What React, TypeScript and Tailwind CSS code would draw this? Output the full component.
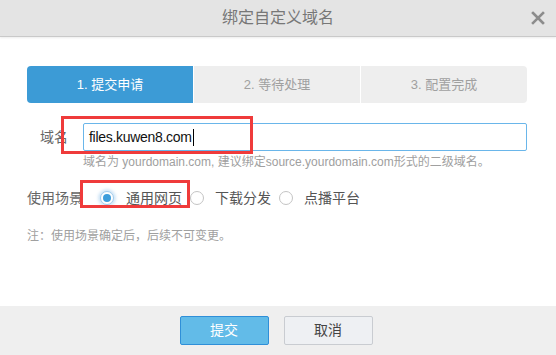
const font = { fontFamily: '"Liberation Sans", "Noto Sans CJK SC", sans-serif' };

const steps = ['1. 提交申请', '2. 等待处理', '3. 配置完成'];

function Radio({ checked }: { checked?: boolean }) {
  if (checked) {
    return (
      <span className="flex h-[14px] w-[14px] shrink-0 items-center justify-center rounded-full border border-[#9fcbed] bg-white shadow-[0_0_3px_2px_rgba(120,180,230,0.35)]">
        <span className="block h-[8px] w-[8px] rounded-full bg-[#3d9ddb]" />
      </span>
    );
  }
  return <span className="block h-[14px] w-[14px] shrink-0 rounded-full border border-[#c4c4c4] bg-white" />;
}

export default function App() {
  return (
    <div className="flex h-[355px] w-[556px] flex-col overflow-hidden bg-white" style={font}>
      {/* title bar */}
      <div className="relative flex h-[37px] shrink-0 items-center justify-center border-b border-[#c9c9c9] bg-[#e4e4e4] shadow-[0_1px_2px_rgba(0,0,0,0.08)]">
        <span className="text-[16px] text-[#777]">绑定自定义域名</span>
        <svg className="absolute right-[11px] top-[11px]" width="14" height="14" viewBox="0 0 14 14">
          <path d="M2 2 L12 12 M12 2 L2 12" stroke="#8c8c8c" strokeWidth="2.6" strokeLinecap="square" />
        </svg>
      </div>

      {/* body */}
      <div className="flex-1 pl-[27px] pr-[29px] pt-[29px]">
        <div className="flex h-[37px] gap-px overflow-hidden rounded-[4px]">
          {steps.map((s, i) => (
            <div
              key={s}
              className={
                i === 0
                  ? 'flex flex-1 items-center justify-center bg-[#3c9bd6] text-[13px] text-white'
                  : 'flex flex-1 items-center justify-center bg-[#eeeeee] text-[13px] text-[#a0a0a0]'
              }
            >
              {s}
            </div>
          ))}
        </div>

        <div className="relative mt-[20px] flex items-center">
          <span className="w-[56px] shrink-0 pl-[13px] text-[14px] text-[#666]">域名</span>
          <div className="flex h-[28px] flex-1 items-center rounded-[2px] border border-[#6ab6ea] px-[5px] text-[14px] tracking-[-0.3px] text-[#111]">
            files.kuwen8.com
            <span className="ml-[1px] h-[17px] w-px bg-black" />
          </div>
          <div className="absolute left-[34px] top-[-7px] h-[38px] w-[192px] border-[3px] border-[#ef3b3b]" />
        </div>

        <p className="ml-[56px] mt-[4px] text-[12px] leading-[14px] text-[#a0a0a0]">
          域名为 yourdomain.com, 建议绑定source.yourdomain.com形式的二级域名。
        </p>

        <div className="relative mt-[19px] flex h-[20px] items-center text-[14px]">
          <span className="w-[73px] shrink-0 text-[#666]">使用场景</span>
          <Radio checked />
          <span className="ml-[12px] text-[#555]">通用网页</span>
          <span className="ml-[8px]"><Radio /></span>
          <span className="ml-[11px] text-[#555]">下载分发</span>
          <span className="ml-[8px]"><Radio /></span>
          <span className="ml-[11px] text-[#555]">点播平台</span>
          <div className="absolute left-[53px] top-[-8px] h-[28px] w-[110px] border-[3px] border-[#ef3b3b]" />
        </div>

        <p className="mt-[21px] text-[12px] leading-[14px] text-[#a0a0a0]">注：使用场景确定后，后续不可变更。</p>
      </div>

      {/* footer */}
      <div className="flex h-[49px] shrink-0 justify-center gap-[15px] bg-[#efefef] pr-[4px] pt-[10px]">
        <button className="h-[29px] w-[89px] rounded-[2px] border border-[#2f8fd8] bg-[#62bbe8] text-[14px] text-white">
          提交
        </button>
        <button className="h-[29px] w-[89px] rounded-[2px] border border-[#c9ccd1] bg-[#eef0f3] text-[14px] text-[#444]">
          取消
        </button>
      </div>
    </div>
  );
}
